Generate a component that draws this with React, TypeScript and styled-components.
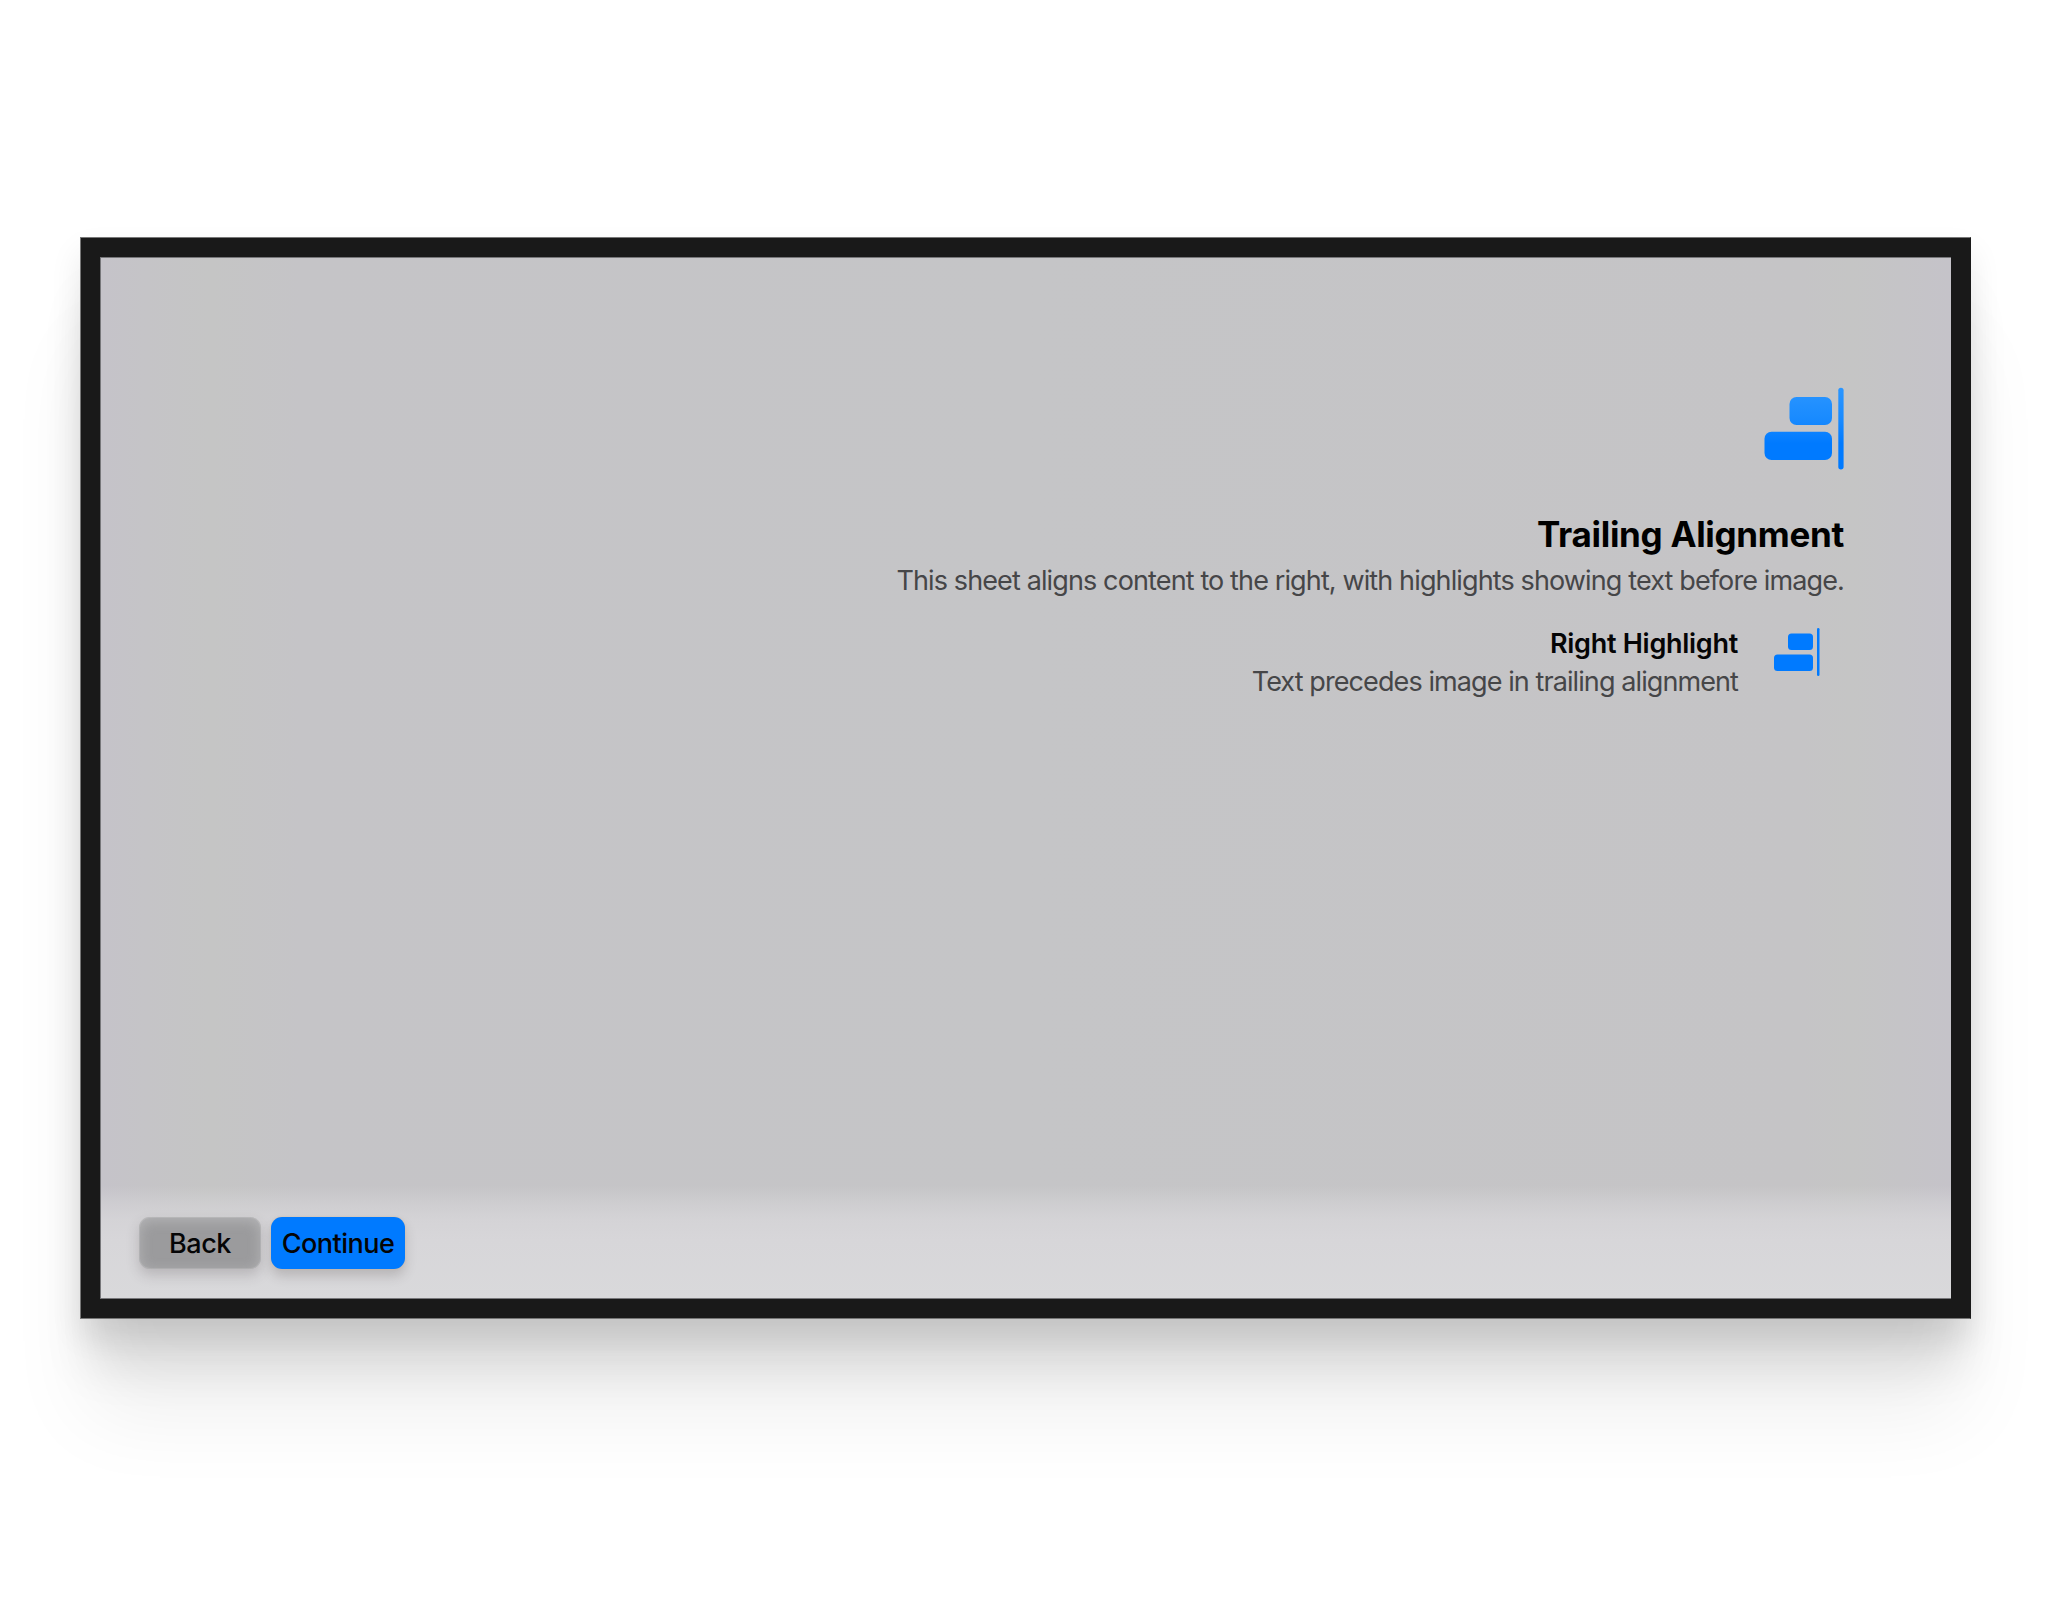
import React from "react";
import styled, { createGlobalStyle } from "styled-components";

const GlobalStyle = createGlobalStyle`
  * { box-sizing: border-box; }
  body { margin: 0; background: #fff; font-family: Inter, "Noto Sans", sans-serif; }
`;

const Stage = styled.main`
  width: 2052px;
  height: 1601px;
  padding: 237px 80px 282px;
  overflow: hidden;
  background: #fff;
`;

const Bezel = styled.div`
  width: 1891px;
  height: 1082px;
  padding: 19px;
  border: 1px solid #777;
  border-right-color: #191919;
  background: #191919;
  box-shadow:
    0 16px 30px rgba(0, 0, 0, 0.09),
    0 54px 44px -8px rgba(0, 0, 0, 0.1),
    0 102px 80px -8px rgba(0, 0, 0, 0.065);
`;

const Screen = styled.section`
  width: 1851px;
  height: 1042px;
  border: 1px solid #77777a;
  border-right: 0;
  display: flex;
  flex-direction: column;
  background: linear-gradient(90deg, #c5c3c9 0, #c5c4c7 45px, #c5c5c5 110px, #c5c4c7 200px, #c5c5c7 50%, #c5c4c6 1700px, #c5c5c5 1750px, #c5c3c9 100%);
`;

const Content = styled.div`
  flex: 1;
  padding: 129px 107px 0 0;
  display: flex;
  flex-direction: column;
  align-items: flex-end;
`;

const Icon = styled.svg`
  display: block;
  flex: none;
`;

const Title = styled.h1`
  margin: 42px 0 0;
  font-size: 35px;
  line-height: 44px;
  font-weight: 700;
  letter-spacing: -0.31px;
  white-space: nowrap;
`;

const Label = styled.p<{ $strong?: boolean; $spacing: number }>`
  margin: 0;
  font-size: 27px;
  line-height: 38px;
  font-weight: ${(p) => (p.$strong ? 600 : 400)};
  letter-spacing: ${(p) => p.$spacing}px;
  color: ${(p) => (p.$strong ? "#050506" : "#464648")};
  white-space: nowrap;
`;

const Subtitle = styled(Label)`
  margin-top: 6px;
`;

const Highlight = styled.div`
  display: flex;
  align-items: flex-start;
  gap: 36px;
  margin: 25px 24px 0 0;
`;

const HighlightText = styled.div`
  text-align: right;
`;

const HighlightIcon = styled(Icon)`
  margin-top: 3px;
`;

const Footer = styled.footer`
  height: 112px;
  padding: 31px 0 0 38px;
  display: flex;
  align-items: flex-start;
  gap: 10px;
  background: linear-gradient(180deg, rgba(216, 215, 218, 0) 0, rgba(216, 215, 218, 0.45) 16px, rgba(216, 215, 218, 0.8) 34px, #d7d6d9 54px, #d9d9db 100%);
`;

const Button = styled.button<{ $primary?: boolean }>`
  width: ${(p) => (p.$primary ? 134 : 122)}px;
  height: 52px;
  padding: 0;
  border: 0;
  border-radius: 11px;
  font: 500 27px/53px Inter, "Noto Sans", sans-serif;
  letter-spacing: ${(p) => (p.$primary ? -0.5 : -0.4)}px;
  color: #050506;
  background: ${(p) => (p.$primary ? "#007aff" : "#9b9b9d")};
  box-shadow: ${(p) =>
    p.$primary
      ? "0 0 2px rgba(220, 185, 150, 0.9), 0 7px 12px rgba(70, 60, 60, 0.22)"
      : "inset 0 0 0 1px rgba(255,255,255,0.12), inset 0 3px 14px rgba(220,220,222,0.42), 0 6px 13px rgba(70,60,65,0.22)"};
`;

const App = () => (
  <>
    <GlobalStyle />
    <Stage>
      <Bezel>
        <Screen>
          <Content>
            <Icon width="80" height="83" viewBox="0 0 80 83" aria-hidden="true">
              <defs>
                <linearGradient id="blue" gradientUnits="userSpaceOnUse" x1="0" y1="0" x2="0" y2="83">
                  <stop offset="0" stopColor="#2b96ff" />
                  <stop offset="0.4" stopColor="#188aff" />
                  <stop offset="0.68" stopColor="#007aff" />
                  <stop offset="1" stopColor="#007aff" />
                </linearGradient>
              </defs>
              <g fill="url(#blue)">
                <rect x="25.5" y="10" width="42.5" height="28" rx="7" />
                <rect x="0.5" y="44.7" width="67.5" height="28.3" rx="7" />
                <rect x="74.3" y="0.7" width="5.3" height="81.8" rx="2.65" />
              </g>
            </Icon>
            <Title>Trailing Alignment</Title>
            <Subtitle $spacing={-0.875}>This sheet aligns content to the right, with highlights showing text before image.</Subtitle>
            <Highlight>
              <HighlightText>
                <Label $strong $spacing={-0.27}>Right Highlight</Label>
                <Label $spacing={-0.91}>Text precedes image in trailing alignment</Label>
              </HighlightText>
              <HighlightIcon width="46" height="49" viewBox="0 0 46 49" fill="#007aff" aria-hidden="true">
                <rect x="14" y="5.5" width="25" height="16.5" rx="3.5" />
                <rect x="0" y="26.4" width="39" height="16.6" rx="3.5" />
                <rect x="43" y="0" width="2.5" height="48" rx="1.25" />
              </HighlightIcon>
            </Highlight>
          </Content>
          <Footer>
            <Button>Back</Button>
            <Button $primary>Continue</Button>
          </Footer>
        </Screen>
      </Bezel>
    </Stage>
  </>
);

export default App;
